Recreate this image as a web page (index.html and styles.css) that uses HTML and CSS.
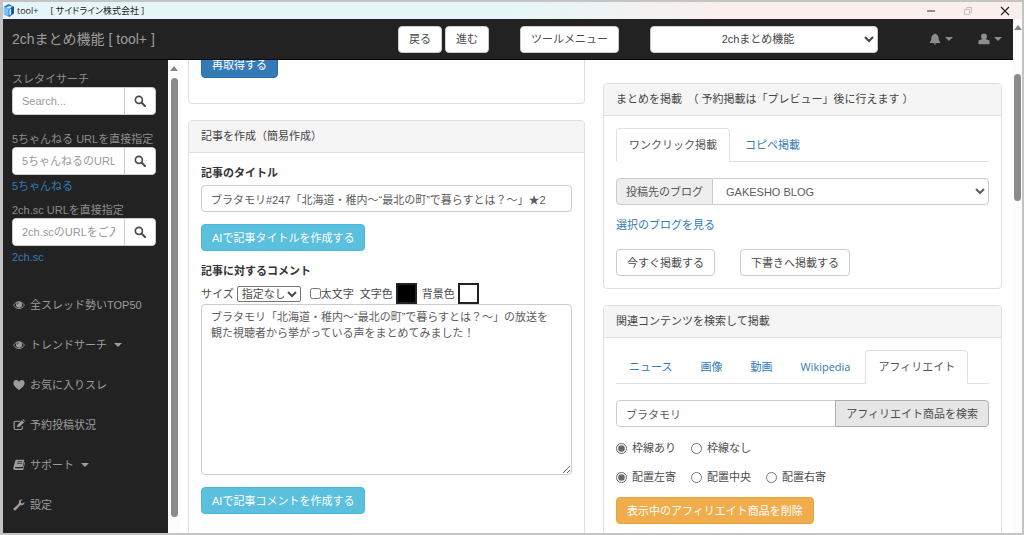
FILE: index.html
```html
<!DOCTYPE html>
<html lang="ja">
<head>
<meta charset="utf-8">
<title>tool+ [ サイドライン株式会社 ]</title>
<link rel="stylesheet" href="styles.css">
</head>
<body>
<svg class="defs" aria-hidden="true">
  <symbol id="search" viewBox="0 0 16 16"><circle cx="6.5" cy="6.5" r="4.7" fill="none" stroke="currentColor" stroke-width="2.2"/><path d="M10 10l4.6 4.6" stroke="currentColor" stroke-width="2.8" stroke-linecap="round"/></symbol>
  <symbol id="eye" viewBox="0 0 16 16"><path d="M.8 8.2C3 4.900 5.300 3.600 8 3.600s5 1.300 7.200 4.600C13 11.500 10.700 12.800 8 12.800S3 11.500.8 8.200z" fill="none" stroke="currentColor" stroke-width="1.200"/><circle cx="8" cy="7.600" r="4" fill="currentColor"/><path d="M5.800 7.400c0-1.300.8-2.100 2-2.200" fill="none" stroke="#222" stroke-width="1"/></symbol>
  <symbol id="heart" viewBox="0 0 16 16"><path d="M8 14.800C5 12.300.5 9 .5 5.300.5 2.800 2.400 1.400 4.300 1.400 6 1.400 7.300 2.400 8 4c.7-1.600 2-2.600 3.700-2.600 1.900 0 3.800 1.400 3.800 3.900 0 3.700-4.500 7-7.500 9.500z" fill="currentColor"/></symbol>
  <symbol id="edit" viewBox="0 0 16 16"><path d="M9.500 3H3.500A2 2 0 0 0 1.500 5v7a2 2 0 0 0 2 2h7a2 2 0 0 0 2-2V9.500" fill="none" stroke="currentColor" stroke-width="1.600"/><path d="M5.300 11l.8-3.300L12 1.800l2.700 2.700-5.900 5.800zM12.700 1.100l1-.8 2.300 2.300-.8 1.100z" fill="currentColor"/></symbol>
  <symbol id="book" viewBox="0 0 16 16"><path d="M5 1h10.200l-2.500 9.500H3.500c-1 0-1.200 1.700-.2 1.700h9.900L15.300 4l.7.600-2.300 9.900H2.600C.8 14.500 0 13 .5 11.200L2.800 3C3.200 1.700 3.900 1 5 1z" fill="currentColor"/><path d="M6 3.600h6.500M5.400 5.800h6.500" stroke="#222" stroke-width="1"/></symbol>
  <symbol id="wrench" viewBox="0 0 16 16"><path d="M15.300 4.200l-2.700 1.700-2.100-.9-.2-2.200L13 1C10.600 0 7.400 1.700 7.600 5.200L7.700 6.300 1 12.200c-1.400 1.700.9 4 2.700 2.700l6.100-6.700c3.500 1 5.900-1.100 5.500-4z" fill="currentColor"/></symbol>
  <symbol id="bell" viewBox="0 0 16 16"><path d="M7 1.500a1 1 0 0 1 2 0c2.700.6 3.700 2.600 3.800 5.200.1 2.500.7 4.300 2.200 5.500v1H1v-1c1.500-1.200 2.100-3 2.200-5.500C3.300 4.100 4.300 2.100 7 1.500zM6 14h4c-.4 2-3.600 2-4 0z" fill="currentColor"/></symbol>
  <symbol id="user" viewBox="0 0 16 16"><path d="M8 .8c2.600 0 3.900 1.600 3.900 3.700 0 1.700-.8 3.200-1.600 3.900l3.900 1c.9.400 1.300 1.200 1.300 5.600H.5c0-4.400.4-5.200 1.300-5.600l3.900-1C4.900 7.700 4.100 6.200 4.100 4.500 4.100 2.400 5.400.8 8 .8z" fill="currentColor"/></symbol>
</svg>

<header class="titlebar">
  <svg class="logo" viewBox="0 0 12 14"><path d="M1 3L6 0l6 3v7l-5 4-6-3z" fill="#2b78cf"/><path d="M1 3L6 5v8L1 11z" fill="#79c4f4"/><path d="M3 4l4-2 3 1-3 2z" fill="#c9ecff"/><path d="M7 6l2-1v6l-2 1z" fill="#d9f1ff"/><path d="M9 4l3-1v7l-3 2z" fill="#1551a8"/></svg>
  <span class="app-name">tool+</span>
  <span>[ サイドライン株式会社 ]</span>
  <div class="window-buttons">
    <svg viewBox="0 0 10 10"><path d="M1 5h8" stroke="#333"/></svg>
    <svg viewBox="0 0 10 10"><path d="M1.500 3.500h5v5h-5zM3.500 3V1.500h5v5H7" fill="none" stroke="#c5bdbd"/></svg>
    <svg viewBox="0 0 10 10"><path d="M1 1l8 8M9 1l-8 8" stroke="#222" stroke-width="1.200"/></svg>
  </div>
</header>

<div class="viewport">
  <div class="app">
    <nav class="navbar">
      <span class="brand">2chまとめ機能 [ tool+ ]</span>
      <div class="nav-actions">
        <button class="btn">戻る</button>
        <button class="btn">進む</button>
        <button class="btn tool-menu">ツールメニュー</button>
        <select class="mode" aria-label="機能"><option>2chまとめ機能</option></select>
      </div>
      <div class="nav-icons">
        <button class="icon-btn" aria-label="通知"><svg class="icon"><use href="#bell"/></svg><i class="caret"></i></button>
        <button class="icon-btn" aria-label="ユーザー"><svg class="icon"><use href="#user"/></svg><i class="caret"></i></button>
      </div>
    </nav>
    <div class="content">
      <aside class="sidebar">
        <div class="side-group first">
          <label for="s1">スレタイサーチ</label>
          <div class="input-group"><input class="field" id="s1" placeholder="Search..."><button class="btn" aria-label="検索"><svg class="icon"><use href="#search"/></svg></button></div>
        </div>
        <div class="side-group">
          <label for="s2">5ちゃんねる URLを直接指定</label>
          <div class="input-group"><input class="field" id="s2" placeholder="5ちゃんねるのURLをご入力"><button class="btn" aria-label="開く"><svg class="icon"><use href="#search"/></svg></button></div>
          <a href="#">5ちゃんねる</a>
        </div>
        <div class="side-group">
          <label for="s3">2ch.sc URLを直接指定</label>
          <div class="input-group"><input class="field" id="s3" placeholder="2ch.scのURLをご入力"><button class="btn" aria-label="開く"><svg class="icon"><use href="#search"/></svg></button></div>
          <a href="#">2ch.sc</a>
        </div>
        <ul class="menu">
          <li><a href="#"><svg class="icon"><use href="#eye"/></svg>全スレッド勢いTOP50</a></li>
          <li><a href="#"><svg class="icon"><use href="#eye"/></svg>トレンドサーチ<i class="caret"></i></a></li>
          <li><a href="#"><svg class="icon"><use href="#heart"/></svg>お気に入りスレ</a></li>
          <li><a href="#"><svg class="icon"><use href="#edit"/></svg>予約投稿状況</a></li>
          <li><a href="#"><svg class="icon"><use href="#book"/></svg>サポート<i class="caret"></i></a></li>
          <li><a href="#"><svg class="icon"><use href="#wrench"/></svg>設定</a></li>
        </ul>
      </aside>
      <div class="scrollbar side-scroll"><i class="arrow"></i><i class="thumb"></i></div>
      <main class="main">
        <div class="column left">
          <section class="panel fetch"><button class="btn primary">再取得する</button></section>
          <section class="panel">
            <h2>記事を作成（簡易作成）</h2>
            <div class="panel-body">
              <label class="strong" for="title">記事のタイトル</label>
              <input class="field" id="title" value="ブラタモリ#247「北海道・稚内～“最北の町”で暮らすとは？～」★2">
              <button class="btn info">AIで記事タイトルを作成する</button>
              <label class="strong" for="comment">記事に対するコメント</label>
              <div class="format">
                <label for="size">サイズ</label><select id="size"><option>指定なし</option></select>
                <label class="bold"><input type="checkbox">太文字</label>
                <span>文字色</span><button class="swatch black" aria-label="文字色"></button>
                <span>背景色</span><button class="swatch" aria-label="背景色"></button>
              </div>
              <textarea class="field" id="comment">ブラタモリ「北海道・稚内～“最北の町”で暮らすとは？～」の放送を観た視聴者から挙がっている声をまとめてみました！</textarea>
              <button class="btn info">AIで記事コメントを作成する</button>
            </div>
          </section>
        </div>
        <div class="column right">
          <section class="panel">
            <h2>まとめを掲載　（ 予約掲載は「プレビュー」後に行えます ）</h2>
            <div class="panel-body">
              <div class="tabs"><a class="active" href="#">ワンクリック掲載</a><a href="#">コピペ掲載</a></div>
              <div class="input-group"><label class="addon" for="blog">投稿先のブログ</label><select class="field blog" id="blog"><option>GAKESHO BLOG</option></select></div>
              <a class="blog-link" href="#">選択のブログを見る</a>
              <div class="post-buttons"><button class="btn">今すぐ掲載する</button><button class="btn">下書きへ掲載する</button></div>
            </div>
          </section>
          <section class="panel">
            <h2>関連コンテンツを検索して掲載</h2>
            <div class="panel-body">
              <div class="tabs"><a href="#">ニュース</a><a href="#">画像</a><a href="#">動画</a><a class="latin" href="#">Wikipedia</a><a class="active" href="#">アフィリエイト</a></div>
              <div class="input-group"><input class="field" value="ブラタモリ" aria-label="検索語"><button class="btn gray">アフィリエイト商品を検索</button></div>
              <div class="radios"><label><input type="radio" name="frame" checked>枠線あり</label><label><input type="radio" name="frame">枠線なし</label></div>
              <div class="radios"><label><input type="radio" name="place" checked>配置左寄</label><label><input type="radio" name="place">配置中央</label><label><input type="radio" name="place">配置右寄</label></div>
              <button class="btn warning">表示中のアフィリエイト商品を削除</button>
            </div>
          </section>
        </div>
      </main>
    </div>
  </div>
  <div class="scrollbar page-scroll"><i class="arrow"></i><i class="thumb"></i></div>
</div>
</body>
</html>
```

FILE: styles.css
```css
* { box-sizing: border-box; }

body {
  margin: 0;
  height: 100vh;
  overflow: hidden;
  display: flex;
  flex-direction: column;
  border: solid #c4c4c4;
  border-width: 2px 2px 2px 3px;
  background: #fff;
  color: #4c4c4c;
  font: 11px/16px "Liberation Sans", "Noto Sans CJK JP", sans-serif;
}

button, input, select, textarea { font: inherit; color: inherit; margin: 0; }
a { color: #337ab7; text-decoration: none; }
.defs { display: none; }
.icon { width: 12px; height: 12px; flex: none; }

.caret {
  border: 4px solid transparent;
  border-top-color: currentColor;
  border-bottom: 0;
}

/* Window title bar */
.titlebar {
  flex: none;
  height: 17px;
  display: flex;
  align-items: center;
  background: linear-gradient(90deg, #e6f6f8 50%, #f9efed 70%);
  color: #222;
  font: 9px/16px "Open Sans", "Noto Sans CJK JP", sans-serif;
  font-feature-settings: "palt";
}
.logo { width: 11px; height: 13px; margin-right: 3px; }
.app-name { margin-right: 12px; }
.window-buttons { margin-left: auto; margin-right: 12px; display: flex; gap: 27px; }
.window-buttons svg { width: 10px; height: 10px; }

.viewport { flex: 1; min-height: 0; display: flex; }
.app { flex: 1; min-width: 0; display: flex; flex-direction: column; }
.content { flex: 1; min-height: 0; display: flex; }

/* Top navigation */
.navbar {
  flex: none;
  height: 41px;
  padding: 0 11px 0 9px;
  display: flex;
  align-items: center;
  background: #222;
  border-bottom: 1px solid #080808;
  color: #9d9d9d;
}
.brand { flex: 1; font-size: 14px; }
.nav-actions { flex: none; display: flex; gap: 3px; }
.tool-menu { margin: 0 28px; }
.mode {
  width: 228px;
  height: 27px;
  border: 1px solid #ccc;
  border-radius: 4px;
  background: #fff;
  color: #444;
  text-align-last: center;
}
.nav-icons { flex: none; width: 124px; display: flex; justify-content: flex-end; gap: 25px; }
.icon-btn {
  display: flex;
  align-items: center;
  gap: 4px;
  padding: 0;
  border: 0;
  background: none;
  color: #8d8d8d;
}

/* Buttons and fields */
.btn {
  height: 27px;
  padding: 0 10px;
  border: 1px solid #ccc;
  border-radius: 4px;
  background: #fff;
  color: #4c4c4c;
  white-space: nowrap;
}
.primary { background: #337ab7; border-color: #2e6da4; color: #fff; }
.info { background: #5bc0de; border-color: #46b8da; color: #fff; }
.warning { background: #f0ad4e; border-color: #eea236; color: #fff; }
.gray { background: #e6e6e6; border-color: #adadad; }

.field {
  display: block;
  width: 100%;
  height: 27px;
  padding: 0 9px;
  border: 1px solid #ccc;
  border-radius: 4px;
  background: #fff;
  color: #5c5c5c;
}
.field::placeholder { color: #999; }

.input-group { display: flex; }
.input-group .field { flex: 1; min-width: 0; }
.input-group > :first-child { border-top-right-radius: 0; border-bottom-right-radius: 0; }
.input-group > :last-child { margin-left: -1px; border-top-left-radius: 0; border-bottom-left-radius: 0; }
.addon {
  padding: 5px 9px 4px;
  border: 1px solid #ccc;
  border-radius: 4px;
  background: #eee;
  color: #555;
}

/* Sidebar */
.sidebar {
  flex: none;
  width: 165px;
  padding: 11px 12px 0 9px;
  overflow: hidden;
  background: #222;
  color: #8d8d8d;
}
.side-group { display: flex; flex-direction: column; margin-bottom: 8px; }
.side-group.first { margin-bottom: 16px; }
.side-group > a { margin-top: 3px; }
.side-group .field, .side-group .btn { height: 28px; }
.side-group .btn { width: 32px; display: flex; align-items: center; justify-content: center; }
.menu { margin: 20px 0 0; padding: 0; list-style: none; }
.menu a { display: flex; align-items: center; gap: 5px; height: 40px; padding-left: 1px; color: #9d9d9d; }
.menu .caret { margin-left: 2px; }

/* Scrollbars */
.scrollbar { flex: none; display: flex; flex-direction: column; align-items: center; background: #fcfcfc; }
.arrow { border: 4px solid transparent; border-bottom: 5px solid #858585; border-top: 0; }
.thumb { width: 7px; border-radius: 4px; background: #8b8b8b; }
.side-scroll { width: 12px; padding: 6px 0 16px; }
.side-scroll .thumb { flex: 1; margin-top: 7px; }
.page-scroll { width: 9px; padding-top: 6px; }
.page-scroll .thumb { height: 25%; margin-top: 44px; }

/* Panels */
.main {
  flex: 1;
  min-width: 0;
  overflow: hidden;
  display: grid;
  grid-template-columns: 397fr 399fr;
  gap: 18px;
  padding: 0 11px 0 8px;
}
.column { min-width: 0; display: flex; flex-direction: column; gap: 16px; }
.left { margin-top: -9px; }
.right { margin-top: 23px; }
.panel { flex: none; border: 1px solid #e0e0e0; border-radius: 4px; }
.left .panel:last-child, .right .panel:last-child { padding-bottom: 40px; }
.fetch { padding: 0 12px 25px; border-top: 0; }
.fetch .btn { display: block; }
h2 {
  margin: 0;
  padding: 7px 12px 8px;
  border-bottom: 1px solid #e0e0e0;
  border-radius: 3px 3px 0 0;
  background: #f5f5f5;
  color: #444;
  font-size: 11px;
  font-weight: 400;
}
.panel-body { padding: 12px; display: flex; flex-direction: column; align-items: flex-start; }
.strong { margin-bottom: 4px; color: #333; font-weight: 700; }
.info { margin: 12px 0; }
.format { display: flex; align-items: center; gap: 3px; height: 21px; }
.format select {
  width: 64px;
  height: 16px;
  padding: 0;
  border: 1px solid #767676;
  border-radius: 2px;
  background: #fff;
}
.bold { display: flex; align-items: center; margin: 0 3px 0 6px; }
.bold input { width: 11px; height: 11px; }
.swatch { width: 21px; height: 21px; padding: 0; margin-right: 2px; border: 2px solid #222; background: #fff; }
.swatch.black { background: #000; }
textarea.field { height: 171px; padding: 4px 16px 4px 9px; line-height: 16px; resize: vertical; }

/* Tabs */
.tabs { align-self: stretch; display: flex; margin-bottom: 16px; border-bottom: 1px solid #e0e0e0; }
.tabs a {
  margin: 0 2px -1px 0;
  padding: 8px 12px;
  border: 1px solid transparent;
  border-radius: 4px 4px 0 0;
}
.tabs .active { border-color: #e0e0e0; border-bottom-color: #fff; background: #fff; color: #555; }
.latin { font-family: "Open Sans", sans-serif; }

.panel-body .input-group { align-self: stretch; }
.blog-link { margin: 12px 0 16px; }
.post-buttons { display: flex; gap: 25px; }
.radios { display: flex; gap: 15px; margin-top: 13px; }
.radios label { display: flex; align-items: center; gap: 5px; }
.radios input { width: 11px; height: 11px; accent-color: #666; }
.warning { margin-top: 12px; }
```
